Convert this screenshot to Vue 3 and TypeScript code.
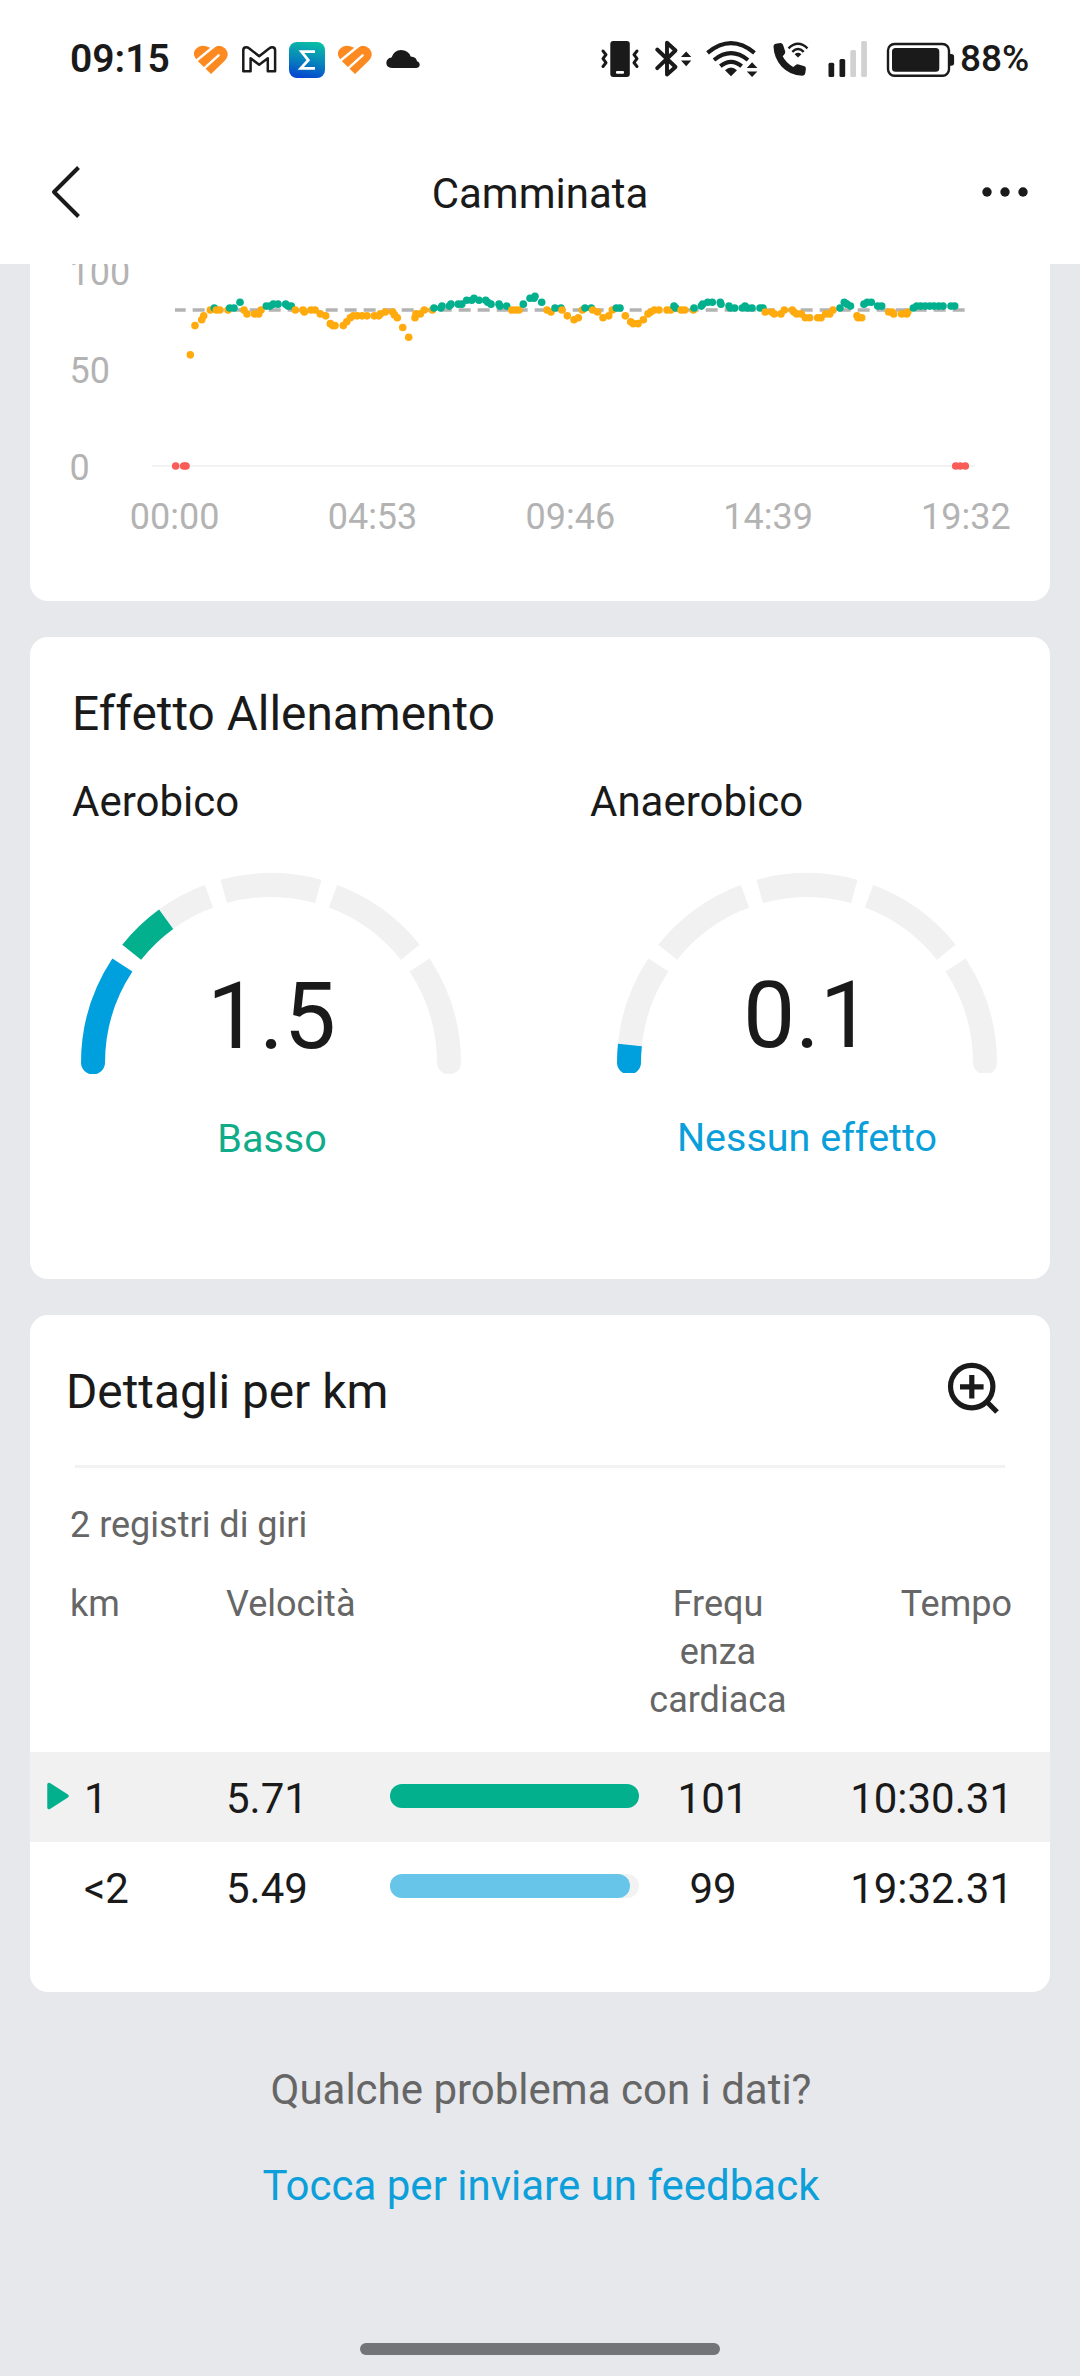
<script setup lang="ts">
interface Segment {
  from: number
  to: number
  color: string
}
interface Gauge {
  title: string
  value: string
  label: string
  tone: string
  clipBottom: number
  segments: Segment[]
}
interface Lap {
  km: string
  speed: string
  fill: number
  color: string
  heart: string
  time: string
  best: boolean
}

const GREY = '#f1f1f1'
const BLUE = '#00a0de'
const GREEN = '#02b08e'
const AMBER = '#ffaa0d'
const RED = '#fa5d56'

// [x, cadence] samples
const samples: [number, number][] = [
  [175.7, 0], [183.7, 0], [186, 0], [190.3, 57], [195, 72], [201.7, 75], [203.7, 77], [210.3, 80],
  [214.3, 81], [216.3, 80], [219.7, 80], [228, 80], [229.7, 81], [234, 81], [240, 84], [244, 80],
  [247, 78], [254.7, 78], [258.7, 78], [261, 80], [266.3, 82], [270, 82], [273.3, 83], [278, 83],
  [285.7, 83], [288, 82], [291.3, 82], [295.3, 80], [303, 80], [304.3, 79], [311, 80], [315, 80],
  [320.3, 78], [325.7, 77], [330.3, 73], [332.7, 72], [335, 72], [343.3, 72], [346.7, 74], [350.3, 76],
  [353.3, 77], [357.3, 77], [362, 77], [367, 77], [374.3, 77], [378.7, 77], [380.3, 78], [385.3, 79],
  [392.7, 79], [394.5, 77.5], [397.3, 76], [402.7, 71], [408.7, 66], [415, 76], [416, 78], [420.3, 78],
  [424.3, 80], [432.3, 80], [434, 81], [440.7, 81], [442, 82], [449.3, 82], [451, 83], [458.3, 83],
  [461.7, 83], [466.7, 85], [471.7, 85], [474, 86], [479, 85], [485.7, 85], [487.7, 84], [491, 83],
  [499, 83], [500, 82], [506.7, 82], [511.7, 80], [515.3, 80], [519, 80], [523.3, 83], [530, 86],
  [534, 86], [535, 87], [541.7, 84], [547, 80], [551, 79], [555, 81], [561, 81], [562, 80],
  [567.3, 77], [574, 75], [578.3, 76], [582.3, 80], [585, 81], [591.3, 81], [592.7, 80], [597.7, 79],
  [603, 76], [608.7, 77], [612.3, 80], [616.3, 81], [620, 81], [625.3, 77], [630.7, 74], [633.3, 73],
  [638, 73], [643.3, 75], [648, 78], [650.7, 79], [654.3, 80], [659, 80], [667, 80], [670.7, 80],
  [674, 82], [675.7, 81], [681, 80], [684.7, 80], [693.3, 80], [694, 81], [701.3, 82], [702.7, 83],
  [707.7, 84], [712.3, 84], [720.3, 84], [721, 83], [729, 82], [730.3, 81], [734.7, 81], [742.3, 81],
  [745, 82], [747.7, 81], [752, 81], [760, 81], [763, 81], [765.3, 79], [771.7, 79], [774.3, 78],
  [781, 78], [784.3, 80], [792.3, 80], [794, 79], [796.7, 78], [801.3, 78], [805.3, 76], [809.7, 76],
  [817.7, 76], [821, 76], [825.7, 78], [829.7, 78], [833, 80], [840, 81], [844.3, 84], [847, 83],
  [850.5, 82], [857, 77], [858, 76], [861.7, 76], [864, 83], [867.3, 84], [871.3, 84], [877.7, 82],
  [881.7, 82], [888.7, 79], [892, 79], [893.7, 78], [901.7, 78], [906.7, 78], [907.7, 79], [913.3, 81],
  [916.7, 82], [920.7, 82], [925.3, 82], [929.7, 82], [934, 82], [938.7, 82], [943, 82], [951, 82],
  [954.7, 82], [955.7, 0], [960.3, 0], [965.3, 0],
]
const dots = samples.map(([x, v]) => ({
  x,
  y: 466 - v * 1.95,
  color: v === 0 ? RED : v > 80 ? GREEN : AMBER,
}))

const yTicks = [
  { label: '100', y: 285 },
  { label: '50', y: 382.5 },
  { label: '0', y: 480 },
]
const xTicks = ['00:00', '04:53', '09:46', '14:39', '19:32'].map((label, i) => ({
  label,
  x: 174.7 + i * 197.8,
}))

// Angles are measured clockwise from the left end of the gauge.
const track: Segment[] = [
  { from: 0, to: 33.4, color: GREY },
  { from: 38.5, to: 69.6, color: GREY },
  { from: 74.6, to: 105.4, color: GREY },
  { from: 110.4, to: 141.5, color: GREY },
  { from: 146.6, to: 180, color: GREY },
]
const gauges: Gauge[] = [
  {
    title: 'Aerobico',
    value: '1.5',
    label: 'Basso',
    tone: '#10ac89',
    clipBottom: 204,
    segments: [...track, { from: 0, to: 33.4, color: BLUE }, { from: 38.5, to: 53.9, color: GREEN }],
  },
  {
    title: 'Anaerobico',
    value: '0.1',
    label: 'Nessun effetto',
    tone: '#0a9fda',
    clipBottom: 203,
    segments: [...track, { from: 0, to: 5.8, color: BLUE }],
  },
]

function arc(s: Segment): string {
  const p = (deg: number) => {
    const a = (deg * Math.PI) / 180
    return `${(193 - 178 * Math.cos(a)).toFixed(2)} ${(193 - 178 * Math.sin(a)).toFixed(2)}`
  }
  return `M${p(s.from)}A178 178 0 0 1 ${p(s.to)}`
}
function capX(s: Segment): number | null {
  if (s.from === 0) return 15
  if (s.to === 180) return 371
  return null
}

const laps: Lap[] = [
  { km: '1', speed: '5.71', fill: 249, color: GREEN, heart: '101', time: '10:30.31', best: true },
  { km: '<2', speed: '5.49', fill: 240, color: '#66c5e9', heart: '99', time: '19:32.31', best: false },
]
const heartShape = 'M211 74L197.500 60.800Q191.500 54 195.500 49.200Q201.500 43.200 209.500 47.600L211.800 48.500Q219.500 43 225.500 48.800Q230.500 55 224.500 61Z'
</script>

<template>
  <div class="screen">
    <header class="top">
      <div class="status">
        <span class="clock">09:15</span>
        <svg viewBox="190 37 46 44" width="46" height="44">
          <path :d="heartShape" fill="#fd8a20" />
          <path d="M193.500 63L216 44.800M202.500 69.800L218.600 55.300" stroke="#fff" stroke-width="2.400" stroke-linecap="round" fill="none" />
        </svg>
        <svg viewBox="236 37 46 44" width="46" height="44">
          <path
            d="M243.3 50.2Q243.3 47.3 246.2 47.3Q247.8 47.3 249 48.3L259.2 56.2L269.4 48.3Q270.6 47.3 272.2 47.3Q275.1 47.3 275.1 50.2V71.3H267.8V58.2L259.2 64.8L250.6 58.2V71.3H243.3Z"
            fill="none" stroke="#1a1a1a" stroke-width="2.5" stroke-linejoin="round"
          />
        </svg>
        <svg viewBox="282 37 50 44" width="50" height="44">
          <defs>
            <linearGradient id="zepp" x1=".6" y1="0" x2=".4" y2="1">
              <stop offset="0" stop-color="#08bda6" />
              <stop offset=".5" stop-color="#0786bb" />
              <stop offset="1" stop-color="#0647cf" />
            </linearGradient>
          </defs>
          <rect x="289" y="42" width="36" height="36" rx="8" fill="url(#zepp)" />
          <path d="M315 51.6H301.5L308.3 60.2L300.8 68.4H315" fill="none" stroke="#fff" stroke-width="2.8" />
        </svg>
        <svg viewBox="190 37 48 44" width="48" height="44" class="second-heart">
          <path :d="heartShape" fill="#fd8a20" />
          <path d="M193.500 63L216 44.800M202.500 69.800L218.600 55.300" stroke="#fff" stroke-width="2.400" stroke-linecap="round" fill="none" />
        </svg>
        <svg viewBox="382 37 44 44" width="44" height="44">
          <path d="M392 68Q386.3 67.4 386.3 62.7Q386.6 58.4 391.5 57.6Q394 50 401 50Q408.3 50 410.7 56.6Q416.2 57 417 61.2Q419.8 62.2 419.7 65Q419.2 68 416 68Z" fill="#1a1a1a" />
        </svg>
        <span class="grow"></span>
        <svg viewBox="598 37 48 44" width="48" height="44">
          <rect x="610.3" y="41" width="19.5" height="36" rx="3" fill="#1a1a1a" />
          <rect x="616" y="71" width="8" height="2.8" rx="1" fill="#fff" />
          <path d="M603 51l3 3.7l-3 4l3 4l-3 3.8M637 51l-3 3.7l3 4l-3 4l3 3.8" fill="none" stroke="#1a1a1a" stroke-width="3" stroke-linecap="round" stroke-linejoin="round" />
        </svg>
        <svg viewBox="646 37 54 44" width="54" height="44">
          <path d="M657.2 49.5L675.5 67L667 74.5V42.8L675.5 50.5L657.2 68.2" fill="none" stroke="#1a1a1a" stroke-width="3.9" stroke-linecap="round" stroke-linejoin="round" />
          <path d="M681 57h10.3l-5.1-5.6zM681 60.6h10.3l-5.1 5.6z" fill="#1a1a1a" />
        </svg>
        <svg viewBox="700 37 66 44" width="66" height="44">
          <g fill="none" stroke="#1a1a1a" stroke-width="4.1">
            <path d="M707.5 52.8Q731 33.4 754.5 52.8" />
            <path d="M714 60Q731 46.4 748 60" />
            <path d="M720.3 66.2Q731 57.6 741.7 66.2" />
          </g>
          <path d="M725 70.3Q731 64.8 737 70.3L731 76.3Z" fill="#1a1a1a" />
          <path d="M746.8 68h10.6l-5.3-5.8zM746.8 71.4h10.6l-5.3 5.6z" fill="#1a1a1a" />
        </svg>
        <svg viewBox="766 37 54 44" width="54" height="44">
          <path d="M773.5 46.5Q773.3 44.2 775.6 43.8L780.5 43Q782.3 43 783 44.7L785.2 51.5Q785.5 53.3 784.2 54.6L782.7 56.3Q785.7 62.6 793.2 67L795.5 65.2Q797 64 798.6 64.5L804.5 66.3Q806 67 805.9 68.8L805.3 73Q804.8 75.7 802 75.7Q790 75.5 781.5 66.5Q773.8 57.5 773.5 46.5Z" fill="#1a1a1a" />
          <g fill="none" stroke="#1a1a1a" stroke-width="2.4">
            <path d="M788.5 48.3Q798 39.3 807.5 48.3" />
            <path d="M792.3 51.8Q798 46.4 803.7 51.8" />
          </g>
          <path d="M794.6 54.2Q798 51.3 801.4 54.2L798 57.6Z" fill="#1a1a1a" />
        </svg>
        <svg viewBox="820 37 60 44" width="60" height="44">
          <rect x="828.5" y="62.7" width="5.7" height="14.3" rx="1.5" fill="#1a1a1a" />
          <rect x="839.5" y="59" width="5.7" height="18" rx="1.5" fill="#1a1a1a" />
          <rect x="850.3" y="50" width="5.7" height="27" rx="1.5" fill="#d1d1d1" />
          <rect x="861.2" y="41" width="5.7" height="36" rx="1.5" fill="#d1d1d1" />
        </svg>
        <svg viewBox="880 37 80 44" width="80" height="44">
          <rect x="888" y="44" width="61" height="31.8" rx="6.5" fill="none" stroke="#1a1a1a" stroke-width="2.4" />
          <rect x="892" y="48" width="47.3" height="23.8" rx="3.5" fill="#1a1a1a" />
          <path d="M949 54h2.3q2.8 0 2.8 2.8v6.2q0 2.8-2.8 2.8h-2.3z" fill="#1a1a1a" />
        </svg>
        <span class="percent">88%</span>
      </div>
      <nav class="appbar">
        <svg viewBox="0 0 120 60" width="120" height="60">
          <path d="M78.5 5.5L54 30L78.5 54.5" fill="none" stroke="#1a1a1a" stroke-width="4" stroke-linejoin="round" />
        </svg>
        <h1>Camminata</h1>
        <svg viewBox="0 0 120 60" width="120" height="60">
          <circle v-for="x in [27, 45, 63]" :key="x" :cx="x" cy="30" r="4.7" fill="#1a1a1a" />
        </svg>
      </nav>
    </header>

    <main>
      <section class="card chart">
        <svg viewBox="30 264 1020 337" width="1020" height="337">
          <g class="tick">
            <text v-for="t in yTicks" :key="t.label" x="69.5" :y="t.y">{{ t.label }}</text>
            <text v-for="t in xTicks" :key="t.label" :x="t.x" y="529" text-anchor="middle">{{ t.label }}</text>
          </g>
          <path d="M152 466H975" stroke="#f2f2f2" stroke-width="2" />
          <path d="M175 310H965" stroke="#b3b3b3" stroke-width="3.6" stroke-dasharray="12 7" stroke-dashoffset="1.33" />
          <circle v-for="(d, i) in dots" :key="i" :cx="d.x" :cy="d.y" r="3.8" :fill="d.color" />
        </svg>
      </section>

      <section class="card effect">
        <h2>Effetto Allenamento</h2>
        <div class="gauges">
          <div v-for="(g, i) in gauges" :key="g.title" class="gauge">
            <h3>{{ g.title }}</h3>
            <svg viewBox="0 0 386 220" width="386" height="220">
              <defs>
                <clipPath :id="'clip' + i"><rect width="386" :height="g.clipBottom" /></clipPath>
              </defs>
              <g :clip-path="`url(#clip${i})`">
                <template v-for="(s, k) in g.segments" :key="k">
                  <path :d="arc(s)" fill="none" :stroke="s.color" stroke-width="24" />
                  <path v-if="capX(s) !== null" :d="`M${capX(s)! - 12} 192.5a12 12 0 0 0 24 0z`" :fill="s.color" />
                </template>
              </g>
              <text x="193.5" :y="i ? 176.7 : 177.7" text-anchor="middle" class="score">{{ g.value }}</text>
            </svg>
            <p :style="{ color: g.tone }">{{ g.label }}</p>
          </div>
        </div>
      </section>

      <section class="card details">
        <div class="heading">
          <h2>Dettagli per km</h2>
          <svg viewBox="945 1360 57 57" width="57" height="57">
            <g fill="none" stroke="#1a1a1a" stroke-width="5.2">
              <circle cx="971.7" cy="1386.6" r="21.2" />
              <path d="M960 1386.8H983.6M971.8 1375V1398.6M986.5 1401.5L997 1412" />
            </g>
          </svg>
        </div>
        <hr />
        <p class="count">2 registri di giri</p>
        <div class="row head">
          <span class="km">km</span>
          <span class="speed">Velocità</span>
          <span class="bar"></span>
          <span class="heart">Frequ<br />enza<br />cardiaca</span>
          <span class="time">Tempo</span>
        </div>
        <div v-for="l in laps" :key="l.km" class="row lap" :class="{ best: l.best }">
          <span class="mark">
            <svg v-if="l.best" viewBox="0 0 24 28" width="24" height="28">
              <path d="M2 2.5L20 14L2 25.5Z" :fill="GREEN" :stroke="GREEN" stroke-width="3.5" stroke-linejoin="round" />
            </svg>
          </span>
          <span class="km">{{ l.km }}</span>
          <span class="speed">{{ l.speed }}</span>
          <span class="bar"><i :style="{ width: l.fill + 'px', background: l.color }"></i></span>
          <span class="heart">{{ l.heart }}</span>
          <span class="time">{{ l.time }}</span>
        </div>
      </section>
    </main>

    <footer>
      <p>Qualche problema con i dati?</p>
      <a>Tocca per inviare un feedback</a>
      <div class="home"></div>
    </footer>
  </div>
</template>

<style>
body {
  margin: 0;
  background: #e7e8ec;
}
</style>

<style scoped>
.screen {
  display: flex;
  flex-direction: column;
  width: 1080px;
  height: 2376px;
  overflow: hidden;
  background: #e7e8ec;
  color: #1a1a1a;
  font-family: Roboto, "Liberation Sans", sans-serif;
}
svg {
  display: block;
  flex: none;
}
h1, h2, h3, p {
  margin: 0;
  font-weight: 400;
  white-space: nowrap;
}
.top {
  height: 264px;
  background: #fff;
}
.status {
  display: flex;
  align-items: center;
  height: 118px;
  padding-left: 70px;
  box-sizing: border-box;
}
.clock {
  width: 120px;
  font-size: 39px;
  font-weight: 600;
  line-height: 44px;
}
.second-heart {
  margin-left: 2px;
}
.grow {
  flex: 1;
}
.percent {
  width: 120px;
  font-size: 37px;
  font-weight: 500;
  line-height: 46px;
}
.appbar {
  display: flex;
  align-items: center;
  justify-content: space-between;
  height: 148px;
}
h1 {
  font-size: 42px;
  line-height: 50px;
  padding-top: 3px;
}
main {
  display: flex;
  flex-direction: column;
  gap: 36px;
  padding: 0 30px;
}
.card {
  border-radius: 18px;
  background: #fff;
  overflow: hidden;
}
.chart {
  height: 337px;
  border-radius: 0 0 18px 18px;
}
.tick {
  font-size: 36px;
  fill: #b3b3b3;
}
.effect {
  height: 642px;
  box-sizing: border-box;
  padding: 47px 0 0 42px;
}
h2 {
  font-size: 47.8px;
  line-height: 60px;
}
.gauges {
  display: flex;
  gap: 130px;
  padding-top: 31px;
}
.gauge {
  width: 406px;
}
.gauge:first-child {
  width: 388px;
}
h3 {
  font-size: 42px;
  line-height: 54px;
}
.gauge svg {
  margin: 41px 0 0 6px;
}
.gauge:last-child svg {
  margin-left: 23.5px;
}
.score {
  font-size: 93px;
  fill: #1a1a1a;
}
.gauge p {
  width: 386px;
  margin: 25px 0 0 7px;
  text-align: center;
  font-size: 39.5px;
  line-height: 48px;
}
.gauge:last-child p {
  margin: 24px 0 0 24px;
}
.details {
  height: 677px;
}
.heading {
  display: flex;
  justify-content: space-between;
  align-items: center;
  height: 150px;
  padding: 0 48px 0 36px;
}
.heading h2 {
  padding-top: 3px;
}
.heading svg {
  margin-top: -3px;
}
hr {
  height: 3px;
  margin: 0 45px;
  border: 0;
  background: #f2f2f2;
}
.count {
  margin: 33px 0 0 40px;
  color: #666;
  font-size: 36px;
  line-height: 48px;
}
.row {
  display: flex;
  padding-right: 38px;
}
.head {
  height: 172px;
  margin-top: 31px;
  padding-left: 40px;
  color: #666;
  font-size: 36px;
  line-height: 48px;
}
.km {
  width: 156px;
}
.speed {
  width: 164px;
}
.bar {
  width: 249px;
}
.heart {
  width: 158px;
  text-align: center;
}
.time {
  flex: 1;
  text-align: right;
}
.lap {
  align-items: center;
  height: 90px;
  padding-right: 37px;
  font-size: 42px;
  line-height: 50px;
}
.lap > .km,
.lap > .speed,
.lap > .heart,
.lap > .time {
  padding-top: 3px;
}
.best {
  background: #f1f1f1;
}
.mark {
  width: 37px;
  padding-left: 17px;
}
.mark svg {
  margin-top: -2px;
}
.lap .km {
  width: 142px;
}
.lap .bar {
  height: 24px;
  margin-top: -2px;
  border-radius: 12px;
  background: #f2f2f2;
}
.lap .bar i {
  display: block;
  height: 24px;
  border-radius: 12px;
}
.lap .heart {
  width: 148px;
}
footer {
  display: flex;
  flex: 1;
  flex-direction: column;
  align-items: center;
  padding-top: 73px;
  font-size: 42px;
  line-height: 50px;
}
footer p,
footer a {
  padding-left: 2px;
}
footer p {
  color: #666;
}
footer a {
  margin-top: 46px;
  color: #0d9fd9;
}
.home {
  width: 360px;
  height: 12px;
  margin: auto 0 21px;
  border-radius: 6px;
  background: #737477;
}
</style>
